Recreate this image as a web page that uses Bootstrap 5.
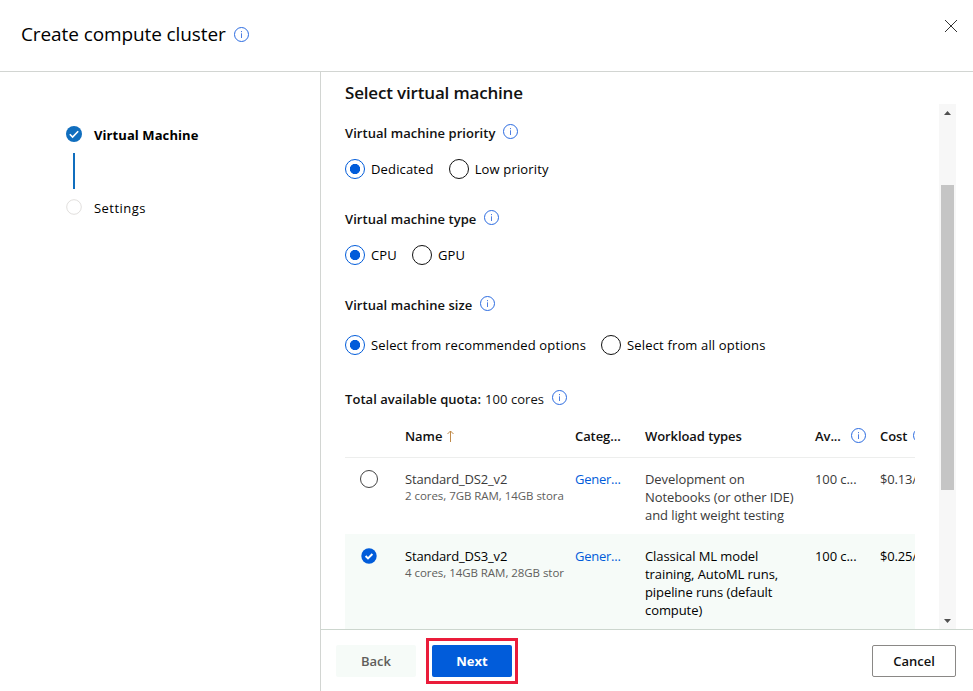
<!DOCTYPE html>
<html lang="en">
<head>
<meta charset="utf-8">
<title>Create compute cluster</title>
<link href="https://cdn.jsdelivr.net/npm/bootstrap@5.3.0/dist/css/bootstrap.min.css" rel="stylesheet">
<style>
body{font-family:"Open Sans","Noto Sans",sans-serif;font-size:13px;line-height:18px;color:#000;background:#fff;height:691px}
svg{display:block;flex:none}
.top-bar{height:72px;border-bottom:1px solid #d2d5d2;padding:0 15px 0 21px}
.top-heading{height:69px}
.top-title{font-size:19px;line-height:28px;font-weight:400;margin:0 0 2px;letter-spacing:-.1px}
.close-x{margin-top:19px}
.steps{width:320px;padding:52px 0 0 66px}
.step-row{height:22px}
.step-row svg{margin:0 12px 2px 0}
.step-now{letter-spacing:.08px}
.step-next{letter-spacing:.45px}
.step-line{width:2px;height:36px;margin:7px 0 8px 7px;background:#106ebe}
.wizard{border-left:1px solid #d2d5d2;min-width:0}
.wizard-title{font-size:17px;line-height:24px;font-weight:600;height:32px;padding:9px 0 0 24px;margin:0;letter-spacing:-.17px;color:#111}
.scroll-body{height:525px;padding-left:24px;margin-right:17px}
.form-pane{width:570px;padding-top:17px}
.sect{height:24px;font-weight:600;color:#111;letter-spacing:.05px}
.sect svg{margin:0 0 3px 8px}
.sect+.choice{margin-top:14px}
.choice+.sect{margin-top:28px}
.sect+.choice.size-choice{margin-top:18px}
.choice+.sect.quota{margin-top:32px}
.choice{height:20px;gap:15px;letter-spacing:.15px}
.choice label{gap:6px}
.form-check-input.dot{width:20px;height:20px;margin:0;border:1px solid #111;background:#fff;box-shadow:none}
.form-check-input.dot:checked{border-color:#015cda;background:radial-gradient(circle,#015cda 4.8px,#fff 5.4px)}
.form-check-input.dot-sm{width:18px;height:18px;border-color:#444;margin-left:-1px}
.grid-row{display:grid;grid-template-columns:60px 170px 70px 170px 65px 35px;overflow:hidden;letter-spacing:-.08px}
.grid-head{height:43px;border-bottom:1px solid #edeeed;font-weight:600;align-items:center;margin-top:4px;color:#111}
.grid-row>div{white-space:nowrap}
.tip-avail{margin:0 0 1px 10px}
.tip-cost{margin:0 0 1px 6px}
.row-a{height:76px;padding-top:12px;color:#3a3a3a}
.row-b{height:96px;padding-top:13px;background:#f6fbf8}
.picked{margin-top:1px;color:#015cda}
.vm-name{letter-spacing:-.17px}
.spec{font-size:11.5px;line-height:16px;width:160px;letter-spacing:-.05px;color:#605e5c}
.cat{color:#015cda;letter-spacing:-.25px}
.price{letter-spacing:-.2px}
.gauge{width:17px;background:#f7f7f7;padding:7px 2px 6px}
.gauge-thumb{width:13px;height:305px;background:#c5c5c5;margin-top:70px}
.foot{height:62px;border-top:1px solid #ccd6ce;padding:8px 17px 0 15px}
.foot .btn{height:32px;font-size:13px;line-height:18px;font-weight:600;border-radius:2px;padding:0}
.foot .b-back{width:80px;background:#f6fbf8;color:#605e5c;margin:7px 10px 0 0}
.next-frame{border:3px solid #ea1c3a;padding:4px 3px;width:92px;height:46px}
.foot .b-next{width:80px;background:#015cda;color:#fff;font-weight:700;display:block}
.foot .b-cancel{width:84px;border:1px solid #8a8886;color:#111;background:#fff;margin-top:7px}
</style>
</head>
<body class="d-flex flex-column overflow-hidden">
<svg width="0" height="0" class="d-none"><defs>
<symbol id="info" viewBox="0 0 15 15"><circle cx="7.5" cy="7.5" r="7" fill="none" stroke="#2b6be0"/><path d="M7.5 6.3V11" stroke="#4f7fe2"/><path d="M7.5 4v1.2" stroke="#4f7fe2"/></symbol>
<symbol id="done" viewBox="0 0 16 16"><circle cx="8" cy="8" r="8" fill="currentColor"/><path d="M3.8 8.2l2.8 2.8 5.6-5.8" fill="none" stroke="#fff" stroke-width="1.6"/></symbol>
<symbol id="picked" viewBox="0 0 16 16"><circle cx="8" cy="8" r="7.7" fill="currentColor"/><path d="M4.6 8l2.4 2.4 4.4-4.4" fill="none" stroke="#fff" stroke-width="2"/></symbol>
</defs></svg>
<header class="top-bar d-flex flex-shrink-0">
<div class="top-heading d-flex align-items-center gap-2"><h1 class="top-title">Create compute cluster</h1><svg width="15" height="15"><use href="#info"/></svg></div>
<svg class="close-x ms-auto" width="14" height="14" viewBox="0 0 14 14"><path d="M1 1l12 12M13 1L1 13" stroke="#333" fill="none"/></svg>
</header>
<div class="d-flex flex-grow-1">
<aside class="steps flex-shrink-0">
<div class="step-row d-flex align-items-center"><svg width="16" height="16" color="#106ebe"><use href="#done"/></svg><span class="step-now fw-bold">Virtual Machine</span></div>
<div class="step-line"></div>
<div class="step-row d-flex align-items-center"><svg width="16" height="16" viewBox="0 0 16 16"><circle cx="8" cy="8" r="7.3" fill="none" stroke="#e1dfdd"/></svg><span class="step-next">Settings</span></div>
</aside>
<main class="wizard flex-grow-1">
<h2 class="wizard-title">Select virtual machine</h2>
<div class="scroll-body d-flex justify-content-between overflow-hidden">
<div class="form-pane">
<div class="sect d-flex align-items-center"><span>Virtual machine priority</span><svg width="15" height="15"><use href="#info"/></svg></div>
<div class="choice d-flex">
<label class="d-flex align-items-center"><input class="form-check-input dot" type="radio" name="priority" checked><span>Dedicated</span></label>
<label class="d-flex align-items-center"><input class="form-check-input dot" type="radio" name="priority"><span>Low priority</span></label>
</div>
<div class="sect d-flex align-items-center"><span>Virtual machine type</span><svg width="15" height="15"><use href="#info"/></svg></div>
<div class="choice d-flex">
<label class="d-flex align-items-center"><input class="form-check-input dot" type="radio" name="type" checked><span>CPU</span></label>
<label class="d-flex align-items-center"><input class="form-check-input dot" type="radio" name="type"><span>GPU</span></label>
</div>
<div class="sect d-flex align-items-center"><span>Virtual machine size</span><svg width="15" height="15"><use href="#info"/></svg></div>
<div class="choice size-choice d-flex">
<label class="d-flex align-items-center"><input class="form-check-input dot" type="radio" name="size" checked><span>Select from recommended options</span></label>
<label class="d-flex align-items-center"><input class="form-check-input dot" type="radio" name="size"><span>Select from all options</span></label>
</div>
<div class="sect quota d-flex align-items-center"><span>Total available quota:</span><span class="fw-normal ms-1">100 cores</span><svg width="15" height="15"><use href="#info"/></svg></div>
<div class="grid-row grid-head">
<div></div><div class="d-flex align-items-center"><span>Name</span><svg class="ms-1" width="9" height="12" viewBox="0 0 9 12"><path d="M4.5 12V1M1.5 4l3-3 3 3" fill="none" stroke="#c08a4a"/></svg></div><div>Categ...</div><div>Workload types</div>
<div class="d-flex align-items-center"><span>Av...</span><svg class="tip-avail" width="15" height="15"><use href="#info"/></svg></div>
<div class="d-flex align-items-center overflow-hidden"><span>Cost</span><svg class="tip-cost" width="15" height="15"><use href="#info"/></svg></div>
</div>
<div class="grid-row row-a">
<div class="ps-3"><input class="form-check-input dot dot-sm d-block" type="radio" name="vm"></div>
<div><div class="vm-name">Standard_DS2_v2</div><div class="spec">2 cores, 7GB RAM, 14GB stora</div></div><div class="cat">Gener...</div>
<div>Development on<br>Notebooks (or other IDE)<br>and light weight testing</div><div>100 c...</div><div class="price">$0.13/</div>
</div>
<div class="grid-row row-b">
<div class="ps-3"><svg class="picked" width="16" height="16"><use href="#picked"/></svg></div>
<div><div class="vm-name">Standard_DS3_v2</div><div class="spec">4 cores, 14GB RAM, 28GB stor</div></div><div class="cat">Gener...</div>
<div>Classical ML model<br>training, AutoML runs,<br>pipeline runs (default<br>compute)</div><div>100 c...</div><div class="price">$0.25/</div>
</div>
</div>
<div class="gauge d-flex flex-column align-items-center">
<svg width="7" height="4" viewBox="0 0 7 4"><path d="M0 4L3.5 0L7 4z" fill="#505050"/></svg>
<div class="gauge-thumb"></div>
<svg class="mt-auto" width="7" height="4" viewBox="0 0 7 4"><path d="M0 0h7L3.5 4z" fill="#505050"/></svg>
</div>
</div>
<footer class="foot d-flex align-items-start">
<button class="btn b-back border-0">Back</button><div class="next-frame"><button class="btn b-next border-0">Next</button></div><button class="btn b-cancel ms-auto">Cancel</button>
</footer>
</main>
</div>
<script src="https://cdn.jsdelivr.net/npm/bootstrap@5.3.0/dist/js/bootstrap.bundle.min.js"></script>
</body>
</html>
